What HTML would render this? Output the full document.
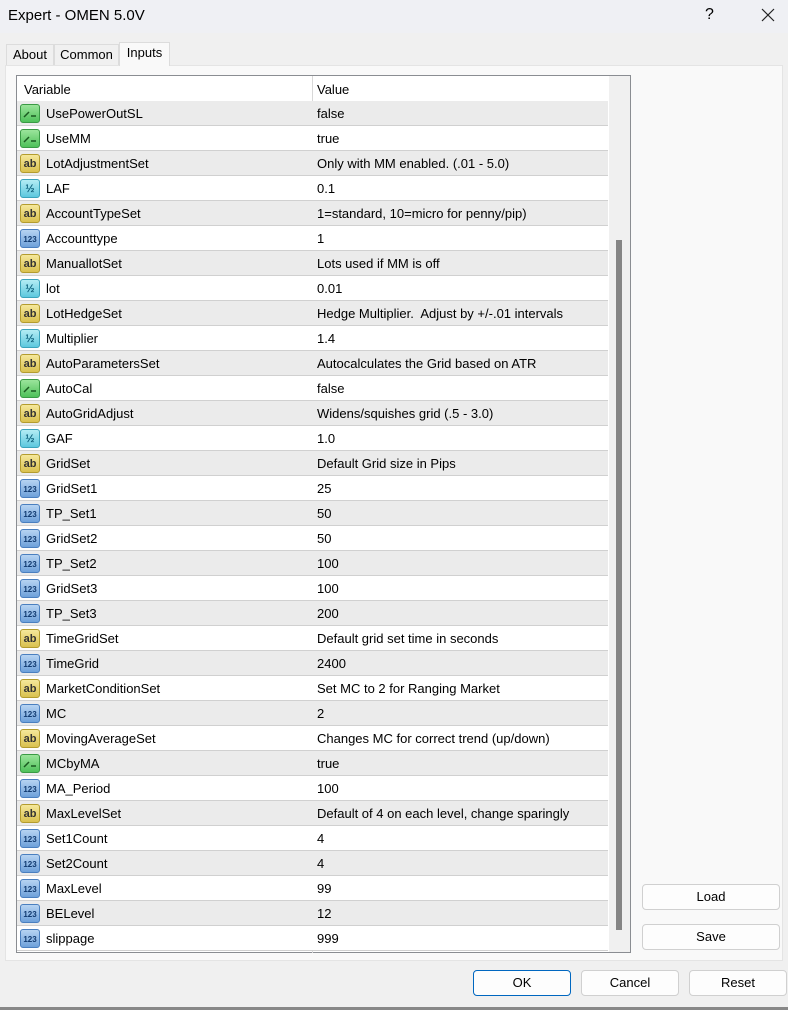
<!DOCTYPE html><html><head><style>
*{margin:0;padding:0;box-sizing:border-box}
body{width:788px;height:1010px;background:#f0f0f0;font-family:"Liberation Sans",sans-serif;font-size:13px;color:#000;position:relative;overflow:hidden}
.abs{position:absolute}
.title{left:0;top:0;width:788px;height:33px;background:#eff0f4}
.tab{border:1px solid #dcdcdc;border-bottom:none;background:#f0f0f0;height:21px;top:44px;text-align:center;line-height:20px;font-size:13px}
.panel{left:5px;top:65px;width:778px;height:896px;background:#f9f9f9;border:1px solid #e4e4e4}
.tbl{left:16px;top:75px;width:615px;height:878px;border:1px solid #8a8d92;background:#fff}
.row{position:absolute;left:0;width:591px;height:25px;border-bottom:1px solid #d0d0d0}
.row span{position:absolute;top:5px}
.v{left:29px}.val{left:300px}
.div{position:absolute;left:295px;top:0;width:1px;height:877px;background:#d8d8d8}
.ic{position:absolute;left:3px;top:3px;width:20px;height:19px;border-radius:3px;font-size:9px;font-weight:bold;text-align:center;line-height:19px}
.b{background:linear-gradient(#9be49b,#4fc15a);border:1px solid #3a9a45}
.s{background:linear-gradient(#f5e79a,#d9c150);border:1px solid #b39c2e;color:#333;font-size:11px}
.d{background:linear-gradient(#b4ecf4,#5dc8de);border:1px solid #3ba3bb;color:#0d5f7a;font-size:11px}
.i{background:linear-gradient(#b7d3f2,#6ea0da);border:1px solid #4a7fbf;color:#113a70;font-size:8px}
.btn{background:#fdfdfd;border:1px solid #d0d0d0;border-radius:4px;text-align:center;line-height:24px;font-size:13px}
</style></head><body>
<div class="abs title"></div>
<div class="abs" style="left:8px;top:7px;font-size:15px">Expert - OMEN 5.0V</div>
<div class="abs" style="left:705px;top:6px;font-size:16px">?</div>
<svg class="abs" style="left:761px;top:8px" width="14" height="14"><path d="M1 1L13 13M13 1L1 13" stroke="#222" stroke-width="1.2"/></svg>
<div class="abs panel"></div>
<div class="abs tab" style="left:6px;width:48px">About</div>
<div class="abs tab" style="left:54px;width:65px">Common</div>
<div class="abs tab" style="left:119px;width:51px;top:42px;height:24px;background:#f9f9f9">Inputs</div>
<div class="abs tbl">
<div class="div"></div>
<div class="row" style="top:0;height:25px;border-bottom:none"><span style="left:7px;top:6px">Variable</span><span style="left:300px;top:6px">Value</span></div>
<div id="rows"></div>
<div style="position:absolute;left:592px;top:0;width:21px;height:876px;background:#f0f0f0"></div>
<div style="position:absolute;left:599px;top:164px;width:6px;height:690px;background:#858585"></div>
</div>
<div class="abs btn" style="left:642px;top:884px;width:138px;height:26px">Load</div>
<div class="abs btn" style="left:642px;top:924px;width:138px;height:26px">Save</div>
<div class="abs btn" style="left:473px;top:970px;width:98px;height:26px;border-color:#0067c0">OK</div>
<div class="abs btn" style="left:581px;top:970px;width:98px;height:26px">Cancel</div>
<div class="abs btn" style="left:689px;top:970px;width:98px;height:26px">Reset</div>
<div class="abs" style="left:0;top:1007px;width:788px;height:3px;background:#888"></div>
<script>
var d=[["b","UsePowerOutSL","false"],["b","UseMM","true"],["s","LotAdjustmentSet","Only with MM enabled. (.01 - 5.0)"],["d","LAF","0.1"],["s","AccountTypeSet","1=standard, 10=micro for penny/pip)"],["i","Accounttype","1"],["s","ManuallotSet","Lots used if MM is off"],["d","lot","0.01"],["s","LotHedgeSet","Hedge Multiplier.&nbsp; Adjust by +/-.01 intervals"],["d","Multiplier","1.4"],["s","AutoParametersSet","Autocalculates the Grid based on ATR"],["b","AutoCal","false"],["s","AutoGridAdjust","Widens/squishes grid (.5 - 3.0)"],["d","GAF","1.0"],["s","GridSet","Default Grid size in Pips"],["i","GridSet1","25"],["i","TP_Set1","50"],["i","GridSet2","50"],["i","TP_Set2","100"],["i","GridSet3","100"],["i","TP_Set3","200"],["s","TimeGridSet","Default grid set time in seconds"],["i","TimeGrid","2400"],["s","MarketConditionSet","Set MC to 2 for Ranging Market"],["i","MC","2"],["s","MovingAverageSet","Changes MC for correct trend (up/down)"],["b","MCbyMA","true"],["i","MA_Period","100"],["s","MaxLevelSet","Default of 4 on each level, change sparingly"],["i","Set1Count","4"],["i","Set2Count","4"],["i","MaxLevel","99"],["i","BELevel","12"],["i","slippage","999"]];
var t={b:'<svg width="16" height="14" style="margin-top:2px"><path d="M2 10L7 5M9 9H14" stroke="#1a5a20" stroke-width="1.5" fill="none"/></svg>',s:"ab",d:"½",i:"123"},h="";
d.forEach(function(r,k){h+='<div class="row" style="top:'+(25+k*25)+'px;background:'+(k%2?'#fff':'#ebebeb')+'"><div class="ic '+r[0]+'">'+t[r[0]]+'</div><span class="v">'+r[1]+'</span><span class="val">'+r[2]+'</span></div>';});
document.getElementById("rows").innerHTML=h;
</script>
</body></html>
